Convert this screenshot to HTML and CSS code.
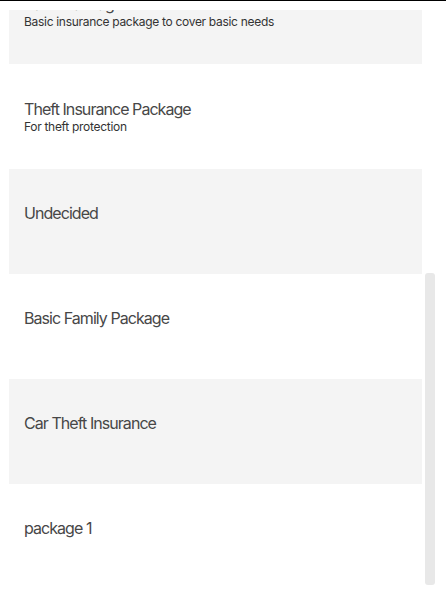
FILE: index.html
```html
<!DOCTYPE html>
<html>
<head>
<meta charset="utf-8">
<link rel="stylesheet" href="styles.css">
</head>
<body>
<div class="topline"></div>
<div class="frame">
  <div class="gap"></div>
  <div class="list">
    <div class="item shaded first">
      <div class="title">Basic Package</div>
      <div class="desc">Basic insurance package to cover basic needs</div>
    </div>
    <div class="item">
      <div class="title">Theft Insurance Package</div>
      <div class="desc">For theft protection</div>
    </div>
    <div class="item shaded">
      <div class="title">Undecided</div>
      <div class="desc empty"></div>
    </div>
    <div class="item">
      <div class="title">Basic Family Package</div>
      <div class="desc empty"></div>
    </div>
    <div class="item shaded">
      <div class="title">Car Theft Insurance</div>
      <div class="desc empty"></div>
    </div>
    <div class="item">
      <div class="title">package 1</div>
      <div class="desc empty"></div>
    </div>
  </div>
  <div class="thumb"></div>
</div>
</body>
</html>
```
FILE: styles.css
```css
html, body {
  margin: 0;
  padding: 0;
  background: #ffffff;
}
body {
  font-family: "Inter", "Noto Sans", sans-serif;
  width: 446px;
  height: 594px;
  overflow: hidden;
}
.topline {
  height: 1px;
  background: #000000;
}
.frame {
  position: relative;
  height: 593px;
  display: flex;
  flex-direction: column;
}
.gap {
  height: 9px;
  flex: none;
}
.list {
  flex: 1;
  overflow: hidden;
  padding-left: 9px;
  width: 413px;
}
.item {
  height: 105px;
  box-sizing: border-box;
  padding: 0 15px;
  display: flex;
  flex-direction: column;
  justify-content: center;
  background: #ffffff;
}
.item.first {
  margin-top: -51px;
}
.item.shaded {
  background: #f4f4f4;
}
.title {
  font-size: 16px;
  line-height: 20px;
  color: #474747;
  letter-spacing: -0.95px;
}
.desc {
  font-size: 12px;
  line-height: 16px;
  color: #333333;
  letter-spacing: -0.3px;
}
.desc.empty {
  height: 18px;
}
.thumb {
  position: absolute;
  left: 425px;
  top: 272px;
  width: 10px;
  height: 312px;
  border-radius: 3px;
  background: #e8e8e8;
}
```
